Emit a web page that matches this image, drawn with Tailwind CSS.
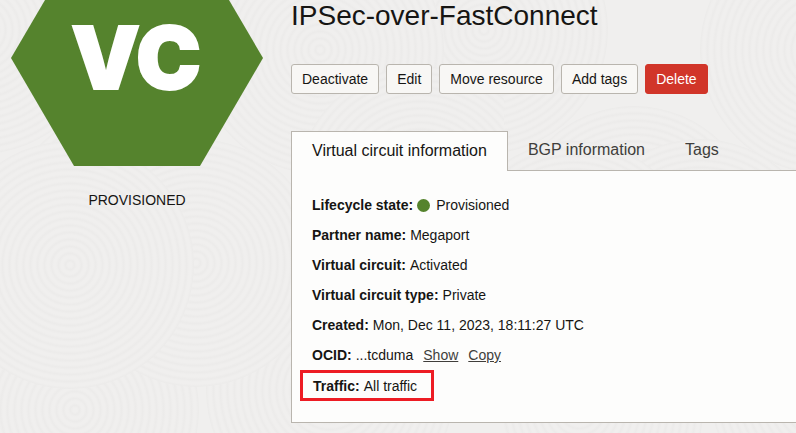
<!DOCTYPE html>
<html lang="en">
<head>
    <meta charset="UTF-8">
    <meta name="viewport" content="width=device-width, initial-scale=1.0">
    <title>IPSec-over-FastConnect</title>
    <script src="https://cdn.jsdelivr.net/npm/@tailwindcss/browser@4"></script>
</head>
<body class="relative min-h-screen overflow-x-hidden bg-[#f0efee] font-['Liberation_Sans',Arial,sans-serif] text-sm text-[#161513]">

    <!-- Background rings -->
    <svg class="absolute inset-0 -z-10 h-full w-full" aria-hidden="true">
        <defs>
            <radialGradient id="ring" gradientUnits="userSpaceOnUse" cx="0" cy="0" r="7" spreadMethod="repeat">
                <stop offset="0" stop-color="#f0efee"/>
                <stop offset="0.3" stop-color="#f0efee"/>
                <stop offset="0.65" stop-color="#ecebea"/>
                <stop offset="1" stop-color="#f0efee"/>
            </radialGradient>
            <circle id="disc" r="124" fill="url(#ring)"/>
            <pattern id="waves" width="504" height="440" patternUnits="userSpaceOnUse">
                <use href="#disc" x="-20" y="30"/>
                <use href="#disc" x="484" y="30"/>
                <use href="#disc" x="320" y="50"/>
                <use href="#disc" x="130" y="230"/>
                <use href="#disc" x="420" y="190"/>
                <use href="#disc" x="330" y="390"/>
                <use href="#disc" x="75" y="410"/>
                <use href="#disc" x="196" y="263"/>
                <use href="#disc" x="70" y="265"/>
            </pattern>
        </defs>
        <rect width="100%" height="100%" fill="url(#waves)"/>
    </svg>

    <div class="flex gap-7 pl-[11px]">

        <!-- Status -->
        <aside class="w-[252px] shrink-0 text-center">
            <svg class="block w-full" viewBox="0 0 252 166" role="img" aria-label="VC">
                <polygon points="34,0 218,0 252,58 189,166 63,166 0,58" fill="#55832d"/>
                <text x="125" y="89" text-anchor="middle" fill="#fff" stroke="#fff" stroke-width="2" font-family="Inter, sans-serif" font-weight="900" font-size="87">VC</text>
            </svg>
            <p class="mt-6 leading-5">PROVISIONED</p>
        </aside>

        <!-- Details -->
        <main class="min-w-0 grow">
            <h1 class="text-[28px] leading-8">IPSec-over-FastConnect</h1>

            <div class="mt-8 flex gap-[7px] whitespace-nowrap">
                <button class="h-[30px] rounded-[3px] border border-[#b9b5ae] bg-[#f8f7f5] px-2.5">Deactivate</button>
                <button class="h-[30px] rounded-[3px] border border-[#b9b5ae] bg-[#f8f7f5] px-2.5">Edit</button>
                <button class="h-[30px] rounded-[3px] border border-[#b9b5ae] bg-[#f8f7f5] px-2.5">Move resource</button>
                <button class="h-[30px] rounded-[3px] border border-[#b9b5ae] bg-[#f8f7f5] px-2.5">Add tags</button>
                <button class="h-[30px] rounded-[3px] border border-[#d13529] bg-[#d13529] px-2.5 text-white">Delete</button>
            </div>

            <div class="mt-[37px] flex text-base whitespace-nowrap" role="tablist">
                <button class="relative -mb-px h-10 border border-b-0 border-[#b9b5ae] bg-[#fdfdfc] px-5 pb-0.5" role="tab" aria-selected="true">Virtual circuit information</button>
                <button class="h-[37px] px-5 text-[#403e3b]" role="tab" aria-selected="false">BGP information</button>
                <button class="h-[37px] px-5 text-[#403e3b]" role="tab" aria-selected="false">Tags</button>
            </div>

            <dl class="border border-r-0 border-[#b9b5ae] bg-[#fdfdfc] px-5 pt-[19px] pb-[21px] leading-[30px]">
                <div class="flex gap-1">
                    <dt class="font-bold">Lifecycle state:</dt>
                    <dd class="flex items-center gap-1.5"><span class="size-[13px] rounded-full bg-[#55832d]"></span>Provisioned</dd>
                </div>
                <div class="flex gap-1">
                    <dt class="font-bold">Partner name:</dt>
                    <dd>Megaport</dd>
                </div>
                <div class="flex gap-1">
                    <dt class="font-bold">Virtual circuit:</dt>
                    <dd>Activated</dd>
                </div>
                <div class="flex gap-1">
                    <dt class="font-bold">Virtual circuit type:</dt>
                    <dd>Private</dd>
                </div>
                <div class="flex gap-1">
                    <dt class="font-bold">Created:</dt>
                    <dd>Mon, Dec 11, 2023, 18:11:27 UTC</dd>
                </div>
                <div class="flex gap-1">
                    <dt class="font-bold">OCID:</dt>
                    <dd class="flex gap-2.5">...tcduma <a href="#" class="text-[#403e3b] underline">Show</a> <a href="#" class="text-[#403e3b] underline">Copy</a></dd>
                </div>
                <div class="-ml-3 flex h-[31px] w-[134px] items-center gap-1 border-3 border-[#ed1c24] pl-2.5">
                    <dt class="font-bold">Traffic:</dt>
                    <dd>All traffic</dd>
                </div>
            </dl>
        </main>
    </div>

</body>
</html>
